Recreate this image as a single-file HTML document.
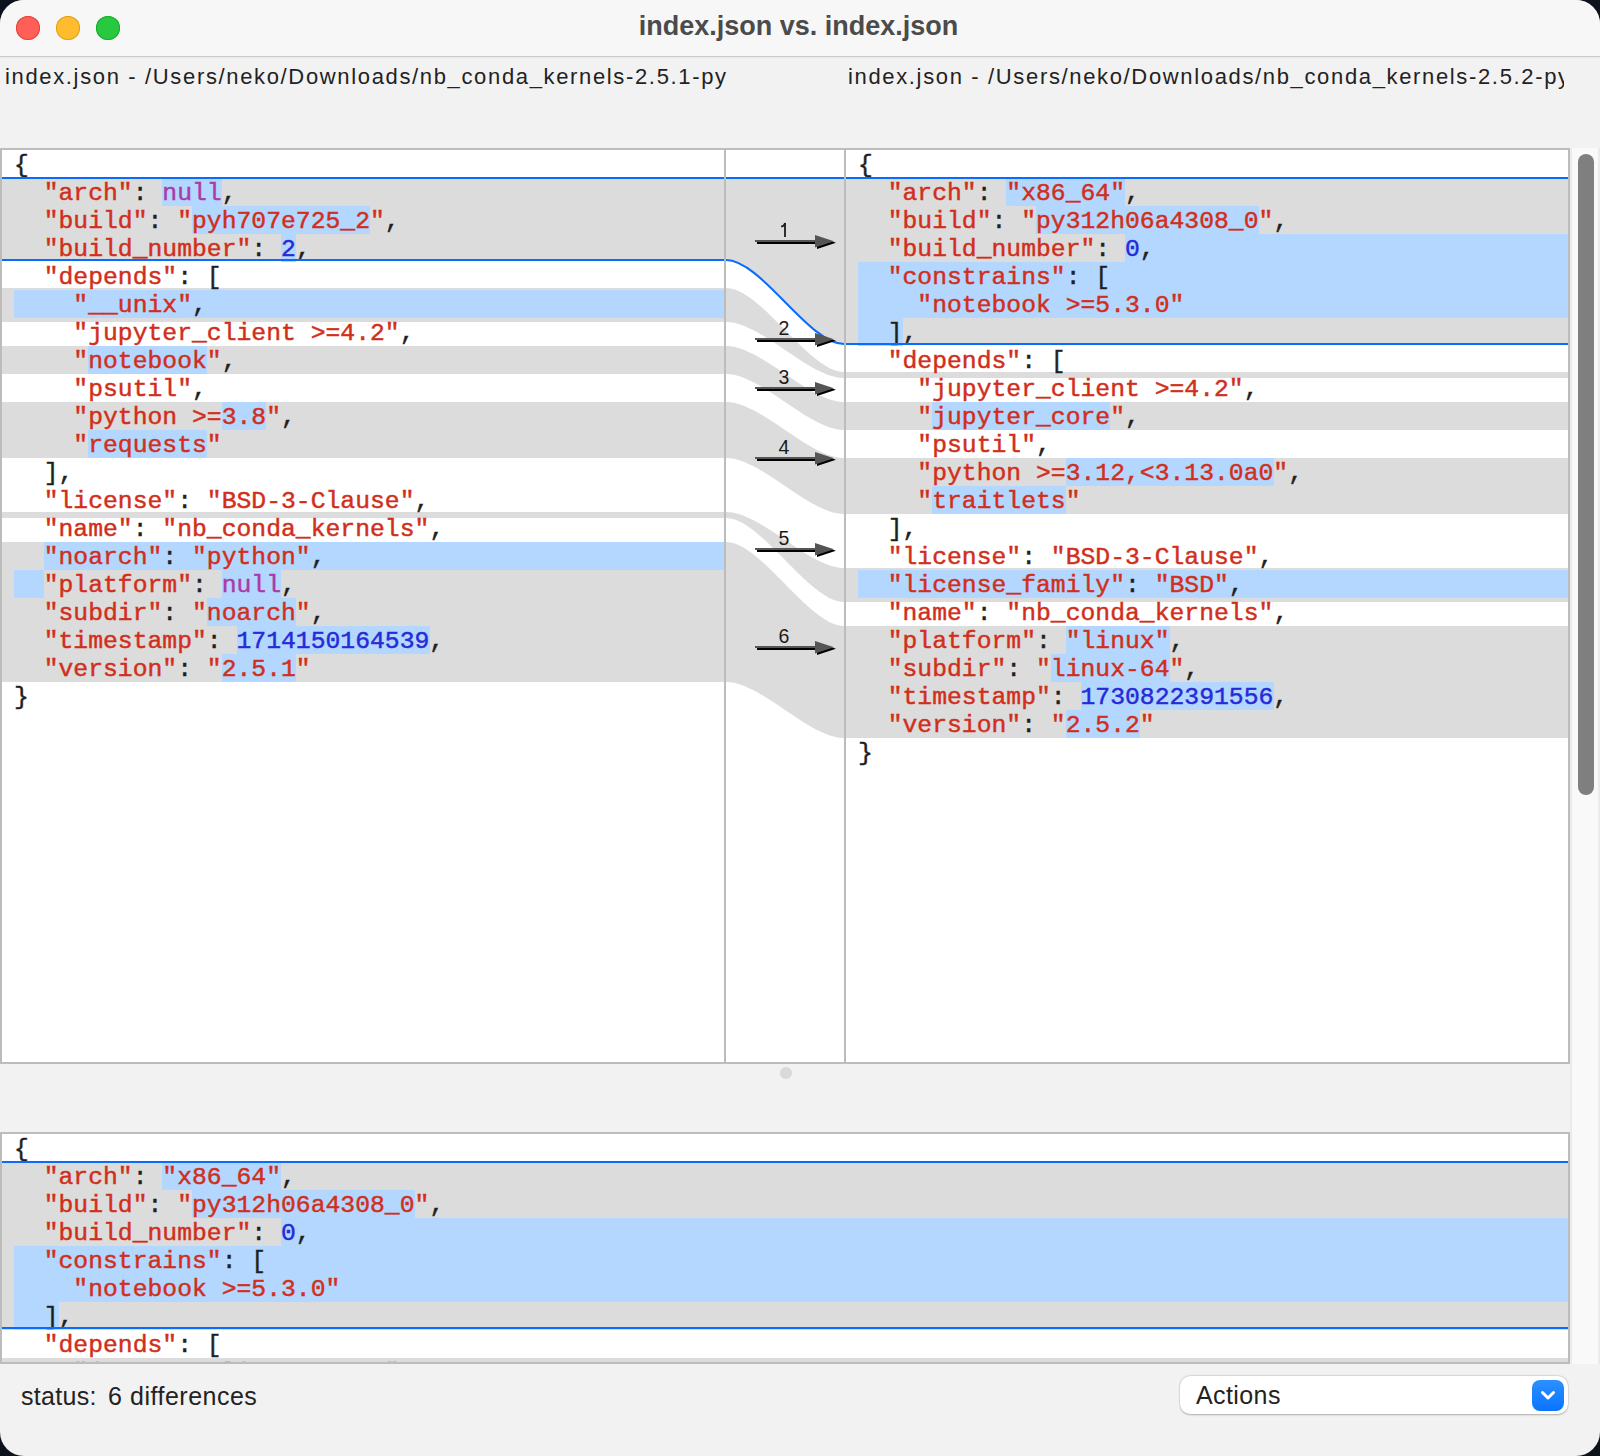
<!DOCTYPE html><html><head><meta charset="utf-8"><style>
*{margin:0;padding:0;box-sizing:border-box}
html,body{width:1600px;height:1456px;overflow:hidden;background:#0e121c}
#win{position:absolute;left:0;top:0;width:1600px;height:1456px;border-radius:24px;background:#f2f2f2;overflow:hidden}
#tb{position:absolute;left:0;top:0;width:1600px;height:57px;background:#f7f7f7;border-bottom:1px solid #cbcbcb;box-shadow:0 1px 1.5px rgba(0,0,0,0.05)}
.tl{position:absolute;top:16px;width:24px;height:24px;border-radius:50%}
#title{position:absolute;left:0;top:0;width:1597px;height:56px;text-align:center;font:bold 27px/53px "Liberation Sans",sans-serif;color:#4b4b4b}
.lbl{position:absolute;top:61px;height:34px;white-space:nowrap;overflow:hidden;font:22px/32px "Liberation Sans",sans-serif;letter-spacing:1.65px;color:#222}
.pane{position:absolute;background:#fff;overflow:hidden}
.band{position:absolute;left:0;right:0;background:#dcdcdc}
.hl{position:absolute;height:28px;background:#b3d7ff}
.code{position:absolute;top:1px;-webkit-text-stroke:0.45px currentColor;font-family:"Liberation Mono",monospace;font-size:24.73px;line-height:28px;color:#1f1f1f;white-space:pre}
.ln{position:absolute;left:0;height:28px}
i{font-style:normal}
.s{color:#d12f1b;-webkit-text-stroke:0.45px #d12f1b}.n{color:#272ad8;-webkit-text-stroke:0.45px #272ad8}.k{color:#ad3aa6;-webkit-text-stroke:0.45px #ad3aa6}
.bl{position:absolute;left:0;right:0;height:2px;background:#0a6cff}
.vb{position:absolute;background:#bcbcbc}
</style></head><body><div id="win"><div id="tb"></div><div class="tl" style="left:16px;background:#ff5f57;box-shadow:inset 0 0 0 1px #e2463f"></div><div class="tl" style="left:56px;background:#febc2e;box-shadow:inset 0 0 0 1px #e1a116"></div><div class="tl" style="left:96px;background:#28c840;box-shadow:inset 0 0 0 1px #14ae29"></div><div id="title">index.json vs. index.json</div><div class="lbl" style="left:5px;width:724px">index.json - /Users/neko/Downloads/nb_conda_kernels-2.5.1-py</div><div class="lbl" style="left:848px;width:716px">index.json - /Users/neko/Downloads/nb_conda_kernels-2.5.2-py3</div><div class="vb" style="left:0;top:148px;width:1570px;height:916px"></div><div class="pane" style="left:2px;top:150px;width:722px;height:912px"><div class="band" style="top:28px;height:82px"></div><div class="band" style="top:138px;height:34px"></div><div class="band" style="top:196px;height:28px"></div><div class="band" style="top:252px;height:56px"></div><div class="band" style="top:362px;height:6px"></div><div class="band" style="top:392px;height:140px"></div><div class="hl" style="left:160.40px;top:28px;width:59.36px"></div><div class="hl" style="left:190.08px;top:56px;width:178.08px"></div><div class="hl" style="left:279.12px;top:84px;width:14.84px"></div><div class="hl" style="left:12.00px;top:140px;width:710.00px"></div><div class="hl" style="left:86.20px;top:196px;width:118.72px"></div><div class="hl" style="left:219.76px;top:252px;width:44.52px"></div><div class="hl" style="left:86.20px;top:280px;width:118.72px"></div><div class="hl" style="left:41.68px;top:392px;width:680.32px"></div><div class="hl" style="left:12.00px;top:420px;width:29.68px"></div><div class="hl" style="left:219.76px;top:420px;width:59.36px"></div><div class="hl" style="left:204.92px;top:448px;width:89.04px"></div><div class="hl" style="left:234.60px;top:476px;width:192.92px"></div><div class="hl" style="left:219.76px;top:504px;width:74.20px"></div><div class="code" style="left:12.00px"><div class="ln" style="top:0px">{</div><div class="ln" style="top:28px">  <i class="s">&quot;arch&quot;</i>: <i class="k">null</i>,</div><div class="ln" style="top:56px">  <i class="s">&quot;build&quot;</i>: <i class="s">&quot;pyh707e725_2&quot;</i>,</div><div class="ln" style="top:84px">  <i class="s">&quot;build_number&quot;</i>: <i class="n">2</i>,</div><div class="ln" style="top:112px">  <i class="s">&quot;depends&quot;</i>: [</div><div class="ln" style="top:140px">    <i class="s">&quot;__unix&quot;</i>,</div><div class="ln" style="top:168px">    <i class="s">&quot;jupyter_client &gt;=4.2&quot;</i>,</div><div class="ln" style="top:196px">    <i class="s">&quot;notebook&quot;</i>,</div><div class="ln" style="top:224px">    <i class="s">&quot;psutil&quot;</i>,</div><div class="ln" style="top:252px">    <i class="s">&quot;python &gt;=3.8&quot;</i>,</div><div class="ln" style="top:280px">    <i class="s">&quot;requests&quot;</i></div><div class="ln" style="top:308px">  ],</div><div class="ln" style="top:336px">  <i class="s">&quot;license&quot;</i>: <i class="s">&quot;BSD-3-Clause&quot;</i>,</div><div class="ln" style="top:364px">  <i class="s">&quot;name&quot;</i>: <i class="s">&quot;nb_conda_kernels&quot;</i>,</div><div class="ln" style="top:392px">  <i class="s">&quot;noarch&quot;</i>: <i class="s">&quot;python&quot;</i>,</div><div class="ln" style="top:420px">  <i class="s">&quot;platform&quot;</i>: <i class="k">null</i>,</div><div class="ln" style="top:448px">  <i class="s">&quot;subdir&quot;</i>: <i class="s">&quot;noarch&quot;</i>,</div><div class="ln" style="top:476px">  <i class="s">&quot;timestamp&quot;</i>: <i class="n">1714150164539</i>,</div><div class="ln" style="top:504px">  <i class="s">&quot;version&quot;</i>: <i class="s">&quot;2.5.1&quot;</i></div><div class="ln" style="top:532px">}</div></div><div class="bl" style="top:27px"></div><div class="bl" style="top:109px"></div></div><div class="pane" style="left:726px;top:150px;width:118px;height:912px"><svg width="118" height="912" viewBox="726 150 118 912" style="position:absolute;left:0;top:0"><path d="M726,178 C761.4,178 808.6,178 844,178 L844,344 C808.6,344 761.4,260 726,260 Z" fill="#dcdcdc"/><path d="M726,288 C761.4,288 808.6,372 844,372 L844,378 C808.6,378 761.4,322 726,322 Z" fill="#dcdcdc"/><path d="M726,346 C761.4,346 808.6,402 844,402 L844,430 C808.6,430 761.4,374 726,374 Z" fill="#dcdcdc"/><path d="M726,402 C761.4,402 808.6,458 844,458 L844,514 C808.6,514 761.4,458 726,458 Z" fill="#dcdcdc"/><path d="M726,512 C761.4,512 808.6,568 844,568 L844,602 C808.6,602 761.4,518 726,518 Z" fill="#dcdcdc"/><path d="M726,542 C761.4,542 808.6,626 844,626 L844,738 C808.6,738 761.4,682 726,682 Z" fill="#dcdcdc"/><path d="M726,178 L844,178" stroke="#0a6cff" stroke-width="2" fill="none"/><path d="M726,260 C761.4,260 808.6,344 844,344" stroke="#0a6cff" stroke-width="2" fill="none"/><g transform="translate(0,241.00)"><path d="M757,0.5 H817 V3.1 H757 Z M817,-4.5 L836,1.75 L817,8 Z" fill="#000"/><path d="M755,-1 H815 V0.9 H755 Z M815,-6 L834,0.25 L815,6.5 Z" fill="#555"/><path d="M784.1,-18.1 H785.9 V-4.1 H784.1 Z" fill="#1a1a1a"/><path d="M781.2,-14.3 C783.3,-14.8 784.6,-16.2 785.2,-18.1" stroke="#1a1a1a" stroke-width="1.8" fill="none"/></g><g transform="translate(0,339.00)"><path d="M757,0.5 H817 V3.1 H757 Z M817,-4.5 L836,1.75 L817,8 Z" fill="#000"/><path d="M755,-1 H815 V0.9 H755 Z M815,-6 L834,0.25 L815,6.5 Z" fill="#555"/><text x="784" y="-4" text-anchor="middle" font-family="Liberation Sans" font-size="19.5" fill="#1a1a1a">2</text></g><g transform="translate(0,388.00)"><path d="M757,0.5 H817 V3.1 H757 Z M817,-4.5 L836,1.75 L817,8 Z" fill="#000"/><path d="M755,-1 H815 V0.9 H755 Z M815,-6 L834,0.25 L815,6.5 Z" fill="#555"/><text x="784" y="-4" text-anchor="middle" font-family="Liberation Sans" font-size="19.5" fill="#1a1a1a">3</text></g><g transform="translate(0,458.00)"><path d="M757,0.5 H817 V3.1 H757 Z M817,-4.5 L836,1.75 L817,8 Z" fill="#000"/><path d="M755,-1 H815 V0.9 H755 Z M815,-6 L834,0.25 L815,6.5 Z" fill="#555"/><text x="784" y="-4" text-anchor="middle" font-family="Liberation Sans" font-size="19.5" fill="#1a1a1a">4</text></g><g transform="translate(0,549.00)"><path d="M757,0.5 H817 V3.1 H757 Z M817,-4.5 L836,1.75 L817,8 Z" fill="#000"/><path d="M755,-1 H815 V0.9 H755 Z M815,-6 L834,0.25 L815,6.5 Z" fill="#555"/><text x="784" y="-4" text-anchor="middle" font-family="Liberation Sans" font-size="19.5" fill="#1a1a1a">5</text></g><g transform="translate(0,647.00)"><path d="M757,0.5 H817 V3.1 H757 Z M817,-4.5 L836,1.75 L817,8 Z" fill="#000"/><path d="M755,-1 H815 V0.9 H755 Z M815,-6 L834,0.25 L815,6.5 Z" fill="#555"/><text x="784" y="-4" text-anchor="middle" font-family="Liberation Sans" font-size="19.5" fill="#1a1a1a">6</text></g></svg></div><div class="pane" style="left:846px;top:150px;width:722px;height:912px"><div class="band" style="top:28px;height:166px"></div><div class="band" style="top:222px;height:6px"></div><div class="band" style="top:252px;height:28px"></div><div class="band" style="top:308px;height:56px"></div><div class="band" style="top:418px;height:34px"></div><div class="band" style="top:476px;height:112px"></div><div class="hl" style="left:160.40px;top:28px;width:118.72px"></div><div class="hl" style="left:190.08px;top:56px;width:222.60px"></div><div class="hl" style="left:279.12px;top:84px;width:442.88px"></div><div class="hl" style="left:12.00px;top:112px;width:710.00px"></div><div class="hl" style="left:12.00px;top:140px;width:710.00px"></div><div class="hl" style="left:12.00px;top:168px;width:44.52px"></div><div class="hl" style="left:86.20px;top:252px;width:178.08px"></div><div class="hl" style="left:219.76px;top:308px;width:207.76px"></div><div class="hl" style="left:86.20px;top:336px;width:133.56px"></div><div class="hl" style="left:12.00px;top:420px;width:710.00px"></div><div class="hl" style="left:219.76px;top:476px;width:103.88px"></div><div class="hl" style="left:204.92px;top:504px;width:118.72px"></div><div class="hl" style="left:234.60px;top:532px;width:192.92px"></div><div class="hl" style="left:219.76px;top:560px;width:74.20px"></div><div class="code" style="left:12.00px"><div class="ln" style="top:0px">{</div><div class="ln" style="top:28px">  <i class="s">&quot;arch&quot;</i>: <i class="s">&quot;x86_64&quot;</i>,</div><div class="ln" style="top:56px">  <i class="s">&quot;build&quot;</i>: <i class="s">&quot;py312h06a4308_0&quot;</i>,</div><div class="ln" style="top:84px">  <i class="s">&quot;build_number&quot;</i>: <i class="n">0</i>,</div><div class="ln" style="top:112px">  <i class="s">&quot;constrains&quot;</i>: [</div><div class="ln" style="top:140px">    <i class="s">&quot;notebook &gt;=5.3.0&quot;</i></div><div class="ln" style="top:168px">  ],</div><div class="ln" style="top:196px">  <i class="s">&quot;depends&quot;</i>: [</div><div class="ln" style="top:224px">    <i class="s">&quot;jupyter_client &gt;=4.2&quot;</i>,</div><div class="ln" style="top:252px">    <i class="s">&quot;jupyter_core&quot;</i>,</div><div class="ln" style="top:280px">    <i class="s">&quot;psutil&quot;</i>,</div><div class="ln" style="top:308px">    <i class="s">&quot;python &gt;=3.12,&lt;3.13.0a0&quot;</i>,</div><div class="ln" style="top:336px">    <i class="s">&quot;traitlets&quot;</i></div><div class="ln" style="top:364px">  ],</div><div class="ln" style="top:392px">  <i class="s">&quot;license&quot;</i>: <i class="s">&quot;BSD-3-Clause&quot;</i>,</div><div class="ln" style="top:420px">  <i class="s">&quot;license_family&quot;</i>: <i class="s">&quot;BSD&quot;</i>,</div><div class="ln" style="top:448px">  <i class="s">&quot;name&quot;</i>: <i class="s">&quot;nb_conda_kernels&quot;</i>,</div><div class="ln" style="top:476px">  <i class="s">&quot;platform&quot;</i>: <i class="s">&quot;linux&quot;</i>,</div><div class="ln" style="top:504px">  <i class="s">&quot;subdir&quot;</i>: <i class="s">&quot;linux-64&quot;</i>,</div><div class="ln" style="top:532px">  <i class="s">&quot;timestamp&quot;</i>: <i class="n">1730822391556</i>,</div><div class="ln" style="top:560px">  <i class="s">&quot;version&quot;</i>: <i class="s">&quot;2.5.2&quot;</i></div><div class="ln" style="top:588px">}</div></div><div class="bl" style="top:27px"></div><div class="bl" style="top:193px"></div></div><div style="position:absolute;left:1570px;top:148px;width:28px;height:1216px;background:#f9f9f9;border-left:2px solid #ebebeb"></div><div style="position:absolute;left:1598px;top:148px;width:2px;height:1216px;background:#ebebeb"></div><div style="position:absolute;left:1578px;top:154px;width:16px;height:641px;border-radius:8px;background:#7f7f7f"></div><div style="position:absolute;left:780px;top:1067px;width:12px;height:12px;border-radius:50%;background:#d9d9d9"></div><div class="vb" style="left:0;top:1132px;width:1570px;height:232px"></div><div class="pane" style="left:2px;top:1134px;width:1566px;height:228px"><div class="band" style="top:28px;height:168px"></div><div class="band" style="top:224px;height:4px"></div><div class="hl" style="left:160.40px;top:28px;width:118.72px"></div><div class="hl" style="left:190.08px;top:56px;width:222.60px"></div><div class="hl" style="left:279.12px;top:84px;width:1286.88px"></div><div class="hl" style="left:12.00px;top:112px;width:1554.00px"></div><div class="hl" style="left:12.00px;top:140px;width:1554.00px"></div><div class="hl" style="left:12.00px;top:168px;width:44.52px"></div><div class="code" style="left:12.00px"><div class="ln" style="top:0px">{</div><div class="ln" style="top:28px">  <i class="s">&quot;arch&quot;</i>: <i class="s">&quot;x86_64&quot;</i>,</div><div class="ln" style="top:56px">  <i class="s">&quot;build&quot;</i>: <i class="s">&quot;py312h06a4308_0&quot;</i>,</div><div class="ln" style="top:84px">  <i class="s">&quot;build_number&quot;</i>: <i class="n">0</i>,</div><div class="ln" style="top:112px">  <i class="s">&quot;constrains&quot;</i>: [</div><div class="ln" style="top:140px">    <i class="s">&quot;notebook &gt;=5.3.0&quot;</i></div><div class="ln" style="top:168px">  ],</div><div class="ln" style="top:196px">  <i class="s">&quot;depends&quot;</i>: [</div><div class="ln" style="top:224px">    <i class="s">&quot;jupyter_client &gt;=4.2&quot;</i>,</div></div><div class="bl" style="top:27px"></div><div class="bl" style="top:193px"></div></div><div style="position:absolute;top:1379px;font:25px/34px 'Liberation Sans',sans-serif;color:#222;white-space:pre;left:21px;letter-spacing:0.3px">status:</div><div style="position:absolute;top:1379px;font:25px/34px 'Liberation Sans',sans-serif;color:#222;white-space:pre;left:108px">6</div><div style="position:absolute;top:1379px;font:25px/34px 'Liberation Sans',sans-serif;color:#222;white-space:pre;left:130px;letter-spacing:0.5px">differences</div><div style="position:absolute;left:1180px;top:1376px;width:388px;height:38px;border-radius:10px;background:#fff;box-shadow:0 0.5px 2px rgba(0,0,0,0.25),0 0 0 0.5px rgba(0,0,0,0.08)"></div><div style="position:absolute;left:1196px;top:1378px;font:25px/34px 'Liberation Sans',sans-serif;letter-spacing:0.4px;color:#222">Actions</div><div style="position:absolute;left:1532px;top:1380px;width:32px;height:31px;border-radius:8px;background:linear-gradient(#2b90ff,#0a74ff)"></div><svg style="position:absolute;left:1532px;top:1380px" width="32" height="31"><path d="M10.5,12.5 L16,18 L21.5,12.5" stroke="#fff" stroke-width="3" fill="none" stroke-linecap="round" stroke-linejoin="round"/></svg></div></body></html>
